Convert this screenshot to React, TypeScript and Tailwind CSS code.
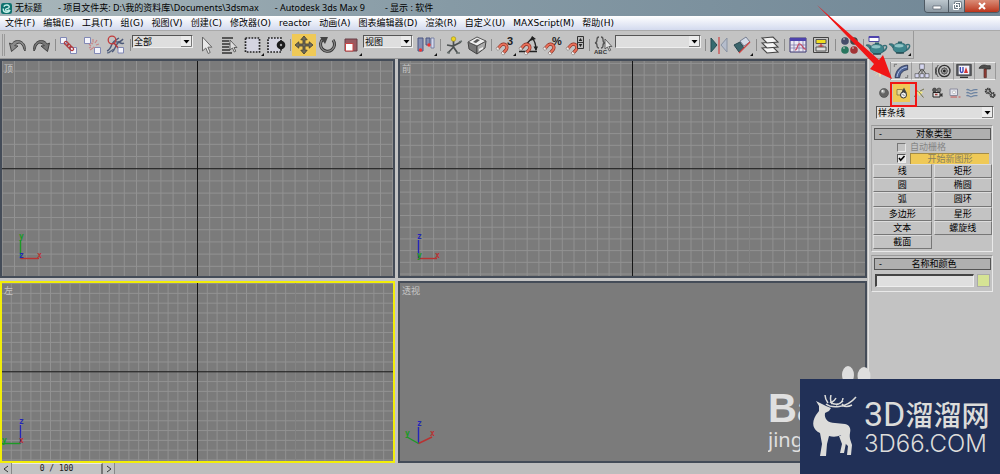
import type { ReactNode } from "react";

type IconProps = { children: ReactNode; size?: string };

function Icon({ children, size = "size-6" }: IconProps) {
  return (
    <svg viewBox="0 0 24 24" className={`${size} shrink-0`} fill="none" aria-hidden="true">
      {children}
    </svg>
  );
}

const FLYOUT = <path d="M23 20v3h-3z" fill="#111" />;

function Magnet() {
  return (
    <g transform="translate(1 2) rotate(42 9 14) scale(.9)">
      <path d="M5.500 20v-6a3.800 3.800 0 0 1 7.600 0v6" stroke="#8e2f22" strokeWidth="3.600" />
      <path d="M5.500 20v-6a3.800 3.800 0 0 1 7.600 0v6" stroke="#e8705a" strokeWidth="2.200" />
      <path d="M3.900 18h3.200v2.500H3.900zM11.500 18h3.200v2.500h-3.200z" fill="#f4efec" stroke="#777" strokeWidth=".6" />
    </g>
  );
}

function Teapot({ y = 0 }: { y?: number }) {
  return (
    <g transform={`translate(0 ${y})`}>
      <path d="M5 14C2 10 1 11 1 10c3-1 5 0 6 3" fill="#397d84" stroke="#285860" strokeWidth=".6" />
      <path d="M18 11c5-2 5 3-1 6" stroke="#346f77" strokeWidth="1.5" />
      <ellipse cx="12" cy="14" rx="7" ry="5.2" fill="#3d858c" stroke="#22535a" strokeWidth=".6" />
      <ellipse cx="11" cy="11.7" rx="4.5" ry="1.7" fill="#8fc3c5" />
      <path d="M10 9h4v-1.5h-4z" fill="#2a6169" />
      <path d="M8 19h8" stroke="#1d3f45" strokeWidth="1.2" />
    </g>
  );
}

const icons = {
  undo: (
    <Icon>
      <path d="M3.5 10l2 8.5 6.5-5.5-3.3-.3C11 9.5 16 8 18 16.500L19 18c2.500-9-8.500-14.500-13.200-7z" fill="#8a8a8a" stroke="#454545" strokeWidth="1" />
    </Icon>
  ),
  redo: (
    <Icon>
      <path d="M20.500 10l-2 8.500-6.500-5.500 3.300-.3C13 9.500 8 8 6 16.500L5 18C2.500 9 13.500 3.500 18.200 11z" fill="#777" stroke="#404040" strokeWidth="1" />
    </Icon>
  ),
  link: (
    <Icon>
      <path d="M3.500 4.500h6v6h-6zM13.500 14.500h6v6h-6z" fill="#f4f4fb" stroke="#8188b5" />
      <g stroke="#b03a3e" strokeWidth="1.300">
        <ellipse cx="9.500" cy="10.500" rx="2.300" ry="1.600" transform="rotate(45 9.500 10.500)" />
        <ellipse cx="12" cy="13" rx="2.300" ry="1.600" transform="rotate(45 12 13)" />
        <ellipse cx="14.500" cy="15.500" rx="2.300" ry="1.600" transform="rotate(45 14.500 15.500)" />
      </g>
    </Icon>
  ),
  unlink: (
    <Icon>
      <path d="M3.500 4.500h6v6h-6zM13.500 14.500h6v6h-6z" fill="#f4f4fb" stroke="#8188b5" />
      <path d="M8 11l2 2M10 10l2 1M12 9.500V6M14 10l2-3M15 12l3-1M8 15l2-1M9 17l3-2M12 14l2 1" stroke="#c98587" strokeWidth="1.200" />
    </Icon>
  ),
  bind: (
    <Icon>
      <path d="M3 18c3-1 4-4 5-7s4-4 7-6M8 19c3-2 3-5 5-8s4-2 6-5M12 9c3-1 5 3 8 1" stroke="#4b5878" strokeWidth="1.400" />
      <path d="M3 20c4 0 4-4 8-4" stroke="#596783" strokeWidth="1.200" />
      <circle cx="8" cy="7" r="3.800" stroke="#c23c3c" strokeWidth="1.300" />
      <path d="M10 10l5 6" stroke="#b03a3e" strokeWidth="1.500" />
      <path d="M14 14.500h5.500v5.500H14z" fill="#f4f4fb" stroke="#8188b5" />
    </Icon>
  ),
  cursor: (
    <Icon>
      <path d="M8.500 4v14l3.300-3 2.400 5.500 2-1-2.300-5.300h4z" fill="#e8e8e8" stroke="#666" />
    </Icon>
  ),
  byName: (
    <Icon>
      <path d="M5 5h11M5 8h7M5 11h10M5 14h7M5 17h8M5 20h10" stroke="#333" strokeWidth="1.500" />
      <path d="M13 7v10l2.400-2 1.900 4 1.500-.8-1.800-3.700h3z" fill="#ddd" stroke="#555" strokeWidth=".9" />
    </Icon>
  ),
  region: (
    <Icon>
      <path d="M4.500 5h14v14h-14z" fill="#d4d4e0" stroke="#222" strokeWidth="1.700" strokeDasharray="1.700 1.300" />
      {FLYOUT}
    </Icon>
  ),
  window: (
    <Icon>
      <path d="M4 5h13v14H4z" fill="#d4d4e0" stroke="#222" strokeWidth="1.700" strokeDasharray="1.700 1.300" />
      <circle cx="17" cy="12" r="4.300" fill="#1c1c1c" />
      <circle cx="17" cy="12" r="1.200" fill="#aaa" />
    </Icon>
  ),
  move: (
    <Icon>
      <path d="M12 3l3.200 3.800H13v4.200h4.200V8.800L21 12l-3.800 3.200V13H13v4.200h2.200L12 21l-3.200-3.800H11V13H6.800v2.200L3 12l3.800-3.200V11H11V6.800H8.800z" fill="#706c5a" stroke="#3c3b33" strokeWidth=".8" />
    </Icon>
  ),
  rotate: (
    <Icon>
      <path d="M7 6a7 7 0 1 0 10 1" stroke="#303030" strokeWidth="3" />
      <path d="M7 6a7 7 0 1 0 10 1" stroke="#858585" strokeWidth="1.300" />
      <path d="M4 4h8L9 11z" fill="#444" />
    </Icon>
  ),
  scale: (
    <Icon>
      <path d="M6 6h12v12H6z" fill="#9a5960" stroke="#663f46" />
      <path d="M6.500 10.500h7.500v7.500H6.500z" fill="#fff" stroke="#c74444" />
      {FLYOUT}
    </Icon>
  ),
  pivot: (
    <Icon>
      <path d="M4 5h5v13H4zM12 5h4v7h-4z" fill="#8790b1" stroke="#4b5582" />
      <path d="M17 5h3v10h-3z" fill="#d5d9ec" stroke="#68719b" strokeWidth=".8" />
      <circle cx="6.500" cy="17" r="1.700" fill="#e33" />
      <circle cx="15" cy="12" r="1.700" fill="#e33" />
      {FLYOUT}
    </Icon>
  ),
  manipulate: (
    <Icon>
      <path d="M11.500 6v8M5 12l6 1 8-4M11.500 14L6 20M11.500 14l4 6" stroke="#4b5050" strokeWidth="1.700" />
      <path d="M17 9l3-1M5 19.500l3 .5M14 20h4" stroke="#68706f" strokeWidth="1.500" />
      <circle cx="11.500" cy="6" r="2.300" fill="#efd51f" stroke="#948618" strokeWidth=".6" />
    </Icon>
  ),
  override: (
    <Icon>
      <path d="M3 9l9 4v8l-8-5z" fill="#777" stroke="#444" />
      <path d="M12 13l9-5-1 7-8 6z" fill="#aaa" stroke="#444" />
      <path d="M3 9l9-5 9 4-9 5z" fill="#ededed" stroke="#555" />
      <path d="M8 9l4-3 3 1-4 3z" fill="#555" />
      <path d="M14 16l4-2v2l-4 2z" fill="#f1f1f1" />
    </Icon>
  ),
  snap: (
    <Icon>
      <Magnet />
      <text x="14" y="12" fontSize="11" fontWeight="700" fontFamily="Liberation Sans, sans-serif" fill="#222">3</text>
      {FLYOUT}
    </Icon>
  ),
  angle: (
    <Icon>
      <path d="M3 18.500h18M5 17L17 4M16 5c3 3 4 8 4 12" stroke="#222" strokeWidth="1.300" />
      <path d="M14 8l2-5 4 3zM17.500 13.500h4.500l-2 4.500z" fill="#222" />
      <Magnet />
    </Icon>
  ),
  percent: (
    <Icon>
      <Magnet />
      <text x="12" y="12" fontSize="11" fontWeight="700" fontFamily="Liberation Sans, sans-serif" fill="#222">%</text>
    </Icon>
  ),
  spinner: (
    <Icon>
      <Magnet />
      <path d="M14.500 3.500h6v12h-6zM14.500 9.500h6" fill="#bbb" stroke="#333" />
      <path d="M17.500 5l1.800 3h-3.600zM17.500 14l1.800-3h-3.600z" fill="#222" />
    </Icon>
  ),
  namedSets: (
    <Icon>
      <path d="M8 4c-4 0 0 5-4 6 4 0 0 5 4 5M10 4c4 0 0 5 4 6-4 0 0 5-4 5" stroke="#555" strokeWidth="1.300" />
      <path d="M14 6v10l2.400-2 2 4 1.300-.8-1.800-3.700h3z" fill="#e4e4e4" stroke="#555" strokeWidth=".9" />
      <text x="3" y="21" fontSize="6" fontFamily="Liberation Sans, sans-serif" fontWeight="700" fill="#333">ABC</text>
    </Icon>
  ),
  mirror: (
    <Icon>
      <path d="M4 5l6 7-6 7z" fill="#366b70" stroke="#294d52" />
      <path d="M20 5l-6 7 6 7z" fill="#b5bdcc" stroke="#8993a3" />
      <path d="M12 4v17" stroke="#c44" strokeWidth="1.200" />
    </Icon>
  ),
  align: (
    <Icon>
      <path d="M4 12l6-3 4 6-5 4z" fill="#3b656c" stroke="#28474e" />
      <path d="M10 8l6-4 4 5-6 4z" fill="#d4dbe7" stroke="#777f91" />
      <path d="M9 20L20 9" stroke="#cf4545" strokeWidth="1.300" />
      {FLYOUT}
    </Icon>
  ),
  layers: (
    <Icon>
      <g fill="#f5f5f5" stroke="#444" strokeWidth="1.100">
        <path d="M4 15l11-1 5 5-11 1z" />
        <path d="M4 10l11-1 5 5-11 1z" />
        <path d="M4 5l11-1 5 5-11 1z" />
      </g>
    </Icon>
  ),
  curve: (
    <Icon>
      <path d="M4 5h16v14H4z" fill="#ece9f4" stroke="#3b3773" />
      <path d="M4 5h16v3H4z" fill="#4e43ad" />
      <path d="M8 8v11M13 8v11M17 8v11M4 12h16M4 15h16" stroke="#7770a0" strokeWidth=".7" />
      <path d="M9 17c3 0 2-7 5-6s3 6 6 5" stroke="#c34e67" strokeWidth="1.200" />
    </Icon>
  ),
  schematic: (
    <Icon>
      <path d="M4.500 4.500h15v15h-15z" fill="#c6c6c6" stroke="#444" />
      <path d="M7 6.500h10v4H7z" fill="#f0de21" stroke="#555" />
      <path d="M7 14h10v4H7z" fill="#ddd" stroke="#555" />
      <path d="M12 10.500V14M9.500 13h5" stroke="#b33" strokeWidth="1.200" />
    </Icon>
  ),
  materials: (
    <Icon>
      <circle cx="8" cy="8" r="3.800" fill="#454c69" />
      <circle cx="17" cy="8" r="3.800" fill="#454545" />
      <circle cx="8" cy="17" r="3.800" fill="#28765f" />
      <circle cx="17" cy="17" r="3.800" fill="#a23335" />
      <path d="M6 6h2M15 6h2M6 15h2M15 15h2" stroke="#ccc" />
    </Icon>
  ),
  renderScene: (
    <Icon>
      <Teapot y={2} />
      <path d="M4 3.500h10v5H4z" fill="#fff" stroke="#4e4aa0" />
      <path d="M4 3h10v2H4z" fill="#4e43ad" />
    </Icon>
  ),
  quickRender: (
    <Icon>
      <Teapot y={1} />
      {FLYOUT}
    </Icon>
  ),
};

type ToolName = keyof typeof icons;

function Tools({ names, width, active }: { names: ToolName[]; width: string; active?: ToolName }) {
  return (
    <div className={`flex shrink-0 ${width}`}>
      {names.map((name) => (
        <button
          key={name}
          type="button"
          aria-label={name}
          className={`flex h-[22px] min-w-0 flex-1 items-center justify-center ${name === active ? "bg-[#efc957]" : ""}`}
        >
          {icons[name]}
        </button>
      ))}
    </div>
  );
}

function Separator() {
  return (
    <div className="flex h-[12px] w-1 shrink-0 justify-center">
      <div className="w-px bg-[#8c8c8c]" />
    </div>
  );
}

function Dropdown({ label, value, width, fill = "bg-[#dedede]" }: { label: string; value: string; width: string; fill?: string }) {
  return (
    <div className={`relative shrink-0 ${width}`}>
      <select
        aria-label={label}
        className={`block h-[13px] w-full appearance-none border border-[#efefef] border-t-[#555] border-l-[#555] pl-px text-[9px] leading-[11px] text-black ${fill}`}
      >
        <option>{value}</option>
      </select>
      <svg viewBox="0 0 11 11" className="pointer-events-none absolute top-px right-px size-[11px]" aria-hidden="true">
        <path d="M0 0h11v11H0z" fill="#ececec" />
        <path d="M0 10.500h10.500V0" stroke="#777" fill="none" />
        <path d="M2.500 4h6l-3 3.500z" fill="#000" />
      </svg>
    </div>
  );
}

type Axis = { x: number; y: number; color: string; name: string; tx: number; ty: number };

function AxisTripod({ axes }: { axes: Axis[] }) {
  return (
    <svg viewBox="0 0 48 36" className="absolute bottom-[11px] left-0 h-9 w-12 overflow-visible" aria-hidden="true">
      {axes.map((a) => (
        <g key={a.name}>
          <path d={`M18.500 29.500L${a.x} ${a.y}`} stroke={a.color} strokeWidth="1.400" />
          <text x={a.tx} y={a.ty} fill={a.color} fontSize="8" fontWeight="700" fontFamily="DejaVu Sans Mono, monospace">
            {a.name}
          </text>
        </g>
      ))}
    </svg>
  );
}

function Grid({ pitch }: { pitch: number }) {
  const steps = Array.from({ length: 81 }, (_, i) => i - 40);
  return (
    <svg className="absolute inset-0 size-full" aria-hidden="true">
      <svg x="50%" y="50%" overflow="visible">
        {steps.map((n) => (
          <g key={n} stroke={n % 10 === 0 ? "#848484" : "#929292"}>
            <path d={`M${n * pitch} -1000V1000`} />
            <path d={`M-2000 ${n * pitch}H2000`} />
          </g>
        ))}
        <path d="M0 -1000V1000M-2000 0H2000" stroke="#161616" />
      </svg>
    </svg>
  );
}

function Viewport({ name, pitch, active, axes }: { name: string; pitch?: number; active?: boolean; axes: Axis[] }) {
  return (
    <section className={`relative min-h-0 overflow-hidden border-2 bg-[#7b7b7b] ${active ? "border-[#f2ee08]" : "border-[#444c58]"}`}>
      {pitch && <Grid pitch={pitch} />}
      <h2 className="relative px-[2px] pt-[2px] text-[9px] leading-3 text-[#c6c6c6]">{name}</h2>
      <AxisTripod axes={axes} />
    </section>
  );
}

const RED = "#b83232";
const GREEN = "#1c9a25";
const BLUE = "#2424b8";

const menus = ["文件(F)", "编辑(E)", "工具(T)", "组(G)", "视图(V)", "创建(C)", "修改器(O)", "reactor", "动画(A)", "图表编辑器(D)", "渲染(R)", "自定义(U)", "MAXScript(M)", "帮助(H)"];

const panelTabs: { name: string; art: ReactNode }[] = [
  { name: "创建", art: <path d="M12 3l2 7 7 2-7 2-2 7-2-7-7-2 7-2zM5 5l14 14M19 5L5 19" fill="#fff8d8" stroke="#e4d9ad" /> },
  {
    name: "修改",
    art: (
      <>
        <path d="M3 22C4 11 10 4 22 3v7c-7 1-11 5-12 12z" fill="#4e6394" stroke="#1b2340" />
        <path d="M6 21C7 13 12 7 21 6" stroke="#b2c1e4" strokeWidth="1.500" />
        <path d="M2 2v4M2 2h4M22 22v-4M22 22h-4" stroke="#555" />
      </>
    ),
  },
  {
    name: "层次",
    art: (
      <>
        <path d="M12 8L5 18M12 8v10M12 8l7 10" stroke="#444" strokeWidth="1.500" />
        <path d="M8.500 1.500h7v8h-7zM1.500 16h6v6h-6zM9 16h6v6H9zM16.500 16h6v6h-6z" fill="#d5d6f0" stroke="#555" />
      </>
    ),
  },
  {
    name: "运动",
    art: (
      <>
        <path d="M5 3C1 8 1 16 5 21M2 6c-2 4-2 8 0 12" stroke="#444" strokeWidth="1.500" />
        <circle cx="14" cy="12" r="8.500" stroke="#333" strokeWidth="2" />
        <circle cx="14" cy="12" r="4.500" stroke="#555" strokeWidth="1.500" />
        <path d="M14 6v12M8 12h12M10 8l8 8M18 8l-8 8" stroke="#555" />
        <circle cx="14" cy="12" r="2" fill="#222" />
      </>
    ),
  },
  {
    name: "显示",
    art: (
      <>
        <path d="M1 2h22v17H1z" fill="#56585f" stroke="#333" />
        <path d="M4 4h16v13H4z" fill="#f3f3fb" />
        <path d="M6.500 6v6c0 3 4 3 4 0V6" stroke="#3944b3" strokeWidth="2" />
        <path d="M12 15l3-9 3 9" fill="#d43434" />
        <path d="M6 21.500h12" stroke="#333" strokeWidth="2" />
      </>
    ),
  },
  {
    name: "工具",
    art: (
      <>
        <path d="M3 8c2-5 8-6 12-4h5v5h-5l-3-1H7z" fill="#4e4e4e" stroke="#222" />
        <path d="M10.500 9h3.500v13h-3.500z" fill="#943e35" stroke="#4c2924" />
      </>
    ),
  },
];

const categories: { name: string; art: ReactNode }[] = [
  {
    name: "几何体",
    art: (
      <>
        <circle cx="12" cy="12" r="9" fill="#646464" stroke="#3d3d3d" />
        <circle cx="10" cy="9" r="4" fill="#a9abaa" />
        <circle cx="9" cy="8" r="1.800" fill="#eee" />
      </>
    ),
  },
  {
    name: "图形",
    art: (
      <>
        <path d="M2 5h11v11H2z" fill="#e6d89b" stroke="#786d39" strokeWidth="1.500" />
        <path d="M16 1l6 12H10z" fill="#444" />
        <circle cx="15" cy="16" r="6" fill="#eee" stroke="#333" strokeWidth="2" />
        <path d="M13 14l4 4" stroke="#555" strokeWidth="1.500" />
      </>
    ),
  },
  {
    name: "灯光",
    art: (
      <>
        <path d="M5 6l15 4-7 8z" fill="#f3e983" />
        <path d="M4 4l6 5M11 9l10 12M14 8l8-4M7 12l-4 8" stroke="#71704c" strokeWidth="2" />
      </>
    ),
  },
  {
    name: "摄影机",
    art: (
      <>
        <circle cx="7" cy="6" r="4" fill="#555" stroke="#222" />
        <circle cx="16" cy="6" r="4" fill="#777" stroke="#222" />
        <path d="M4 11h14v9H4z" fill="#ddd" stroke="#222" strokeWidth="2" />
        <path d="M18 15l5-3v8l-5-3z" fill="#333" />
        <path d="M8 15h5" stroke="#a43c3c" strokeWidth="3" />
      </>
    ),
  },
  {
    name: "辅助对象",
    art: (
      <>
        <path d="M2 4h15v13H2z" fill="#e3e3ec" stroke="#8a8b9c" strokeWidth="2" />
        <circle cx="10" cy="10.500" r="3" fill="#fff" stroke="#999" />
        <path d="M3 20h13M19 20h4" stroke="#c65353" strokeWidth="2" />
      </>
    ),
  },
  {
    name: "空间扭曲",
    art: <path d="M1 6c4-4 6 4 11 1s7-1 11-2M1 12c4-4 6 4 11 1s7-1 11-2M1 18c4-4 6 4 11 1s7-1 11-2" stroke="#6c83a1" strokeWidth="2.500" />,
  },
  {
    name: "系统",
    art: (
      <>
        <circle cx="8" cy="8" r="4.500" stroke="#333" strokeWidth="4" strokeDasharray="2.500 1" />
        <circle cx="17" cy="16" r="4" stroke="#333" strokeWidth="4" strokeDasharray="2.500 1" />
        <circle cx="8" cy="8" r="3" stroke="#555" strokeWidth="2" />
        <circle cx="17" cy="16" r="3" stroke="#555" strokeWidth="2" />
      </>
    ),
  },
];

const shapes = ["线", "矩形", "圆", "椭圆", "弧", "圆环", "多边形", "星形", "文本", "螺旋线", "截面"];

function Rollout({ title, children }: { title: string; children: ReactNode }) {
  return (
    <section className="border border-[#e9e9e9] border-t-[#999] border-l-[#aaa] pt-[2px] pb-[2px] pl-px">
      <button type="button" className="mr-px ml-px flex h-3 w-[calc(100%-2px)] items-center border border-[#555] bg-[#b0b0b0] px-1 text-[9px] leading-[10px]">
        <span aria-hidden="true">-</span>
        <span className="flex-1 text-center">{title}</span>
      </button>
      {children}
    </section>
  );
}

function CommandPanel() {
  return (
    <aside className="flex w-[132px] shrink-0 flex-col border-l border-[#e2e2e2] pt-[3px] text-[9px]">
      <div role="tablist" className="flex h-[18px] pr-1 pl-px">
        {panelTabs.map((tab, i) => (
          <button
            key={tab.name}
            type="button"
            role="tab"
            aria-label={tab.name}
            aria-selected={i === 0}
            className={`flex flex-1 items-center justify-center border-r border-[#999] ${i === 0 ? "" : "border-t border-t-[#eee] border-b border-b-[#eee]"}`}
          >
            <Icon size="size-4">{tab.art}</Icon>
          </button>
        ))}
      </div>
      <div className="mt-1 flex h-[18px] pr-px pl-[6px]">
        {categories.map((c) => (
          <button key={c.name} type="button" aria-label={c.name} className={`flex flex-1 items-center justify-center ${c.name === "图形" ? "bg-[#efc957]" : ""}`}>
            <Icon size="size-3">{c.art}</Icon>
          </button>
        ))}
      </div>
      <div className="mt-1 pr-[6px] pl-[7px]">
        <Dropdown label="图形类别" value="样条线" width="w-full" />
      </div>
      <div className="mt-[6px] mr-[7px] ml-[2px] flex flex-col gap-[3px]">
        <Rollout title="对象类型">
          <div className="flex pt-px pl-6 text-[#858585]">
            <label className="flex h-3 items-center gap-1">
              <input type="checkbox" disabled className="size-[9px] appearance-none border border-[#e5e5e5] border-t-[#777] border-l-[#777]" />
              自动栅格
            </label>
          </div>
          <div className="flex h-[11px] items-center gap-1 pr-[3px] pl-6">
            <span className="relative flex size-[9px] shrink-0">
              <input id="new-shape" type="checkbox" defaultChecked className="size-[9px] appearance-none border border-[#eee] border-t-[#555] border-l-[#555] bg-[#e5e5e5]" />
              <svg viewBox="0 0 9 9" className="pointer-events-none absolute inset-0" aria-hidden="true">
                <path d="M2 4l1.700 2.200L7.500 2" fill="none" stroke="#000" strokeWidth="1.600" />
              </svg>
            </span>
            <label htmlFor="new-shape" className="flex-1 border-t border-l border-[#a48c46] bg-[#efc957] text-center leading-[10px] text-[#88815f]">
              开始新图形
            </label>
          </div>
          <div className="grid h-[85px] auto-rows-fr grid-cols-2 gap-x-[2px]">
            {shapes.map((s) => (
              <button key={s} type="button" className="border border-[#ddd] border-r-[#777] border-b-[#777] text-center leading-3">
                {s}
              </button>
            ))}
          </div>
        </Rollout>
        <Rollout title="名称和颜色">
          <div className="flex items-center gap-[3px] px-[2px] pt-1 pb-[2px]">
            <input aria-label="名称" className="h-[13px] min-w-0 flex-1 border border-[#eee] border-t-2 border-t-[#444] border-l-2 border-l-[#444] bg-[#dfdfdf]" />
            <button type="button" aria-label="颜色" className="h-[13px] w-[13px] border border-[#aaa] bg-[#d5e394]" />
          </div>
        </Rollout>
      </div>
    </aside>
  );
}

function TitleBar() {
  return (
    <header className="relative flex h-4 items-center overflow-hidden bg-linear-to-r from-[#a9b7bb] via-[#869aa5] via-45% to-[#718796] text-[9px]">
      <svg viewBox="0 0 24 24" className="mr-[3px] ml-px size-[11px]" aria-hidden="true">
        <rect width="24" height="24" rx="5" fill="#0d716e" />
        <path d="M6 8c3-6 13-4 12 1s-9 2-8 6 7 2 8-1M5 12c-1 10 12 11 15 3" fill="none" stroke="#c5f0e9" strokeWidth="3" />
      </svg>
      <h1 className="flex gap-4 whitespace-pre text-black">
        <span>无标题</span>
        <span>- 项目文件夹: D:\我的资料库\Documents\3dsmax</span>
        <span>- Autodesk 3ds Max 9</span>
        <span className="pl-1">- 显示 : 软件</span>
      </h1>
      <div className="ml-auto flex h-[13px] self-start overflow-hidden rounded-b-sm border border-t-0 border-[#4e5963] text-white">
        <button type="button" aria-label="最小化" className="flex w-6 items-center justify-center border-r border-[#4e5963] bg-linear-to-b from-[#bdc7ce] to-[#8996a0]">
          <svg viewBox="0 0 10 10" className="size-[10px]" aria-hidden="true"><path d="M1 5h8v3H1z" fill="#fff" stroke="#56606a" strokeWidth=".7" /></svg>
        </button>
        <button type="button" aria-label="还原" className="flex w-4 items-center justify-center border-r border-[#4e5963] bg-linear-to-b from-[#bdc7ce] to-[#8996a0]">
          <svg viewBox="0 0 10 10" className="size-[10px]" fill="none" aria-hidden="true"><path d="M3.500 1.500h5v5h-5z" stroke="#44505a" strokeWidth="2" /><path d="M3.500 1.500h5v5h-5zM1.500 3.500h5v5h-5z" stroke="#fff" /></svg>
        </button>
        <button type="button" aria-label="关闭" className="flex w-[34px] items-center justify-center bg-linear-to-b from-[#d98b76] to-[#bb3319]">
          <svg viewBox="0 0 10 10" className="size-[10px]" aria-hidden="true"><path d="M2 2l6 6M8 2L2 8" stroke="#fff" strokeWidth="2" /></svg>
        </button>
      </div>
    </header>
  );
}

function Brand() {
  return (
    <div className="absolute right-0 bottom-0 flex h-[95px] w-[200px] items-center bg-[#213057] pl-2 text-[#dcdcda]">
      <svg viewBox="0 0 52 64" className="h-16 w-[52px] shrink-0" aria-hidden="true">
        <path d="M11 11l-3-5 6 3 4 2 5 2-2 3-4 2c-1 6 3 10 10 10l10 1c5 1 6 5 5 9-1 5 1 8 2 12l-1 10h-4l1-9c-4-3-6-7-7-11-4 2-8 2-12 1l-2 8-1 12H12l2-12-2-11C5 35 3 28 8 20l3-4z" fill="#dcdcda" />
        <path d="M34 40l4 8-2 10h-4l2-9-3-8z" fill="#dcdcda" />
        <path d="M18 9c5 4 20 5 30-7M20 8c-2-3-3-5-3-8M24 9c-2-3-2-5-1-9M28 10c4-1 7-4 7-7M34 9c2 3 6 3 10 1M28 3c-1 2-2 3-4 4M22 7c4 3 9 3 13-1" fill="none" stroke="#dcdcda" strokeWidth="1.500" />
      </svg>
      <div className="flex flex-col gap-[2px] pl-1 whitespace-nowrap">
        <div className="flex h-8 items-center leading-8">
          <span className="font-['Roboto',sans-serif] text-[34px]">3D</span>
          <span className="font-['Noto_Sans_CJK_SC',sans-serif] text-[28px] font-medium">溜溜网</span>
        </div>
        <div className="font-['Inter',sans-serif] text-[24px] leading-6 font-light">3D66.COM</div>
      </div>
    </div>
  );
}

export default function App() {
  return (
    <div className="relative flex min-h-screen flex-col overflow-hidden bg-[#c3c3c3] font-['Noto_Sans','Noto_Sans_CJK_SC',sans-serif] text-black">
      <TitleBar />
      <nav className="flex h-[15px] items-center gap-2 border-b border-[#aaa] bg-linear-to-b from-white to-[#d3daee] pl-[5px] font-['DejaVu_Sans','Noto_Sans_CJK_SC',sans-serif] text-[9px] leading-3 whitespace-nowrap">
        {menus.map((m) => (
          <button key={m} type="button">{m}</button>
        ))}
      </nav>
      <div role="toolbar" aria-label="主工具栏" className="flex h-7 items-center self-start border-r border-b border-[#999] pr-px">
        <div className="mr-px ml-[2px] h-[22px] w-[3px] shrink-0 border-x border-[#999]" />
        <Tools names={["undo", "redo"]} width="w-[47px]" />
        <Separator />
        <Tools names={["link", "unlink", "bind"]} width="w-[71px]" />
        <Separator />
        <div className="mr-px self-start pt-1"><Dropdown label="选择过滤器" value="全部" width="w-[61px]" /></div>
        <Tools names={["cursor", "byName", "region", "window"]} width="w-[94px]" />
        <Separator />
        <Tools names={["move", "rotate", "scale"]} width="w-[71px]" active="move" />
        <div className="mr-px self-start pt-1"><Dropdown label="参考坐标系" value="视图" width="w-[50px]" /></div>
        <Tools names={["pivot"]} width="w-6" />
        <Separator />
        <Tools names={["manipulate", "override"]} width="w-[47px]" />
        <Separator />
        <Tools names={["snap", "angle", "percent", "spinner"]} width="w-[94px]" />
        <Separator />
        <Tools names={["namedSets"]} width="w-6" />
        <div className="mr-[2px] self-start pt-1"><Dropdown label="命名选择集" value="" width="w-[86px]" /></div>
        <Separator />
        <Tools names={["mirror", "align"]} width="w-[47px]" />
        <Separator />
        <Tools names={["layers"]} width="w-6" />
        <Separator />
        <Tools names={["curve", "schematic"]} width="w-[47px]" />
        <Separator />
        <Tools names={["materials"]} width="w-6" />
        <Separator />
        <Tools names={["renderScene", "quickRender"]} width="w-[47px]" />
      </div>
      <div className="flex flex-1">
        <div className="flex min-w-0 flex-1 flex-col">
          <main className="grid flex-1 grid-cols-[395fr_469fr] grid-rows-[220fr_182fr] gap-[3px] pr-px">
            <Viewport name="顶" pitch={12.2} axes={[
              { x: 18.5, y: 11, color: GREEN, name: "y", tx: 17, ty: 10 },
              { x: 37, y: 29.5, color: RED, name: "x", tx: 35, ty: 29 },
              { x: 18.5, y: 29.5, color: BLUE, name: "z", tx: 17, ty: 29 },
            ]} />
            <Viewport name="前" pitch={11.7} axes={[
              { x: 18.5, y: 11, color: BLUE, name: "z", tx: 17, ty: 10 },
              { x: 37, y: 29.5, color: RED, name: "x", tx: 35, ty: 29 },
              { x: 18.5, y: 29.5, color: GREEN, name: "y", tx: 17, ty: 29 },
            ]} />
            <Viewport name="左" pitch={9.8} active axes={[
              { x: 18.5, y: 11, color: BLUE, name: "z", tx: 17, ty: 10 },
              { x: 0, y: 29.5, color: GREEN, name: "y", tx: 0, ty: 29 },
              { x: 18.5, y: 29.5, color: RED, name: "x", tx: 17, ty: 29 },
            ]} />
            <Viewport name="透视" axes={[
              { x: 18.5, y: 13, color: BLUE, name: "z", tx: 17, ty: 12 },
              { x: 32, y: 23, color: RED, name: "x", tx: 30, ty: 22 },
              { x: 7, y: 23, color: GREEN, name: "y", tx: 5, ty: 22 },
            ]} />
          </main>
          <footer className="flex h-[11px] items-stretch font-['DejaVu_Sans_Mono',monospace] text-[8px] leading-[10px] text-[#222]">
            <button type="button" aria-label="上一帧" className="flex w-3 items-center justify-center border-r border-[#888]">
              <svg viewBox="0 0 8 8" className="size-2" fill="none" aria-hidden="true"><path d="M6 1L2 4l4 3" stroke="#333" /></svg>
            </button>
            <div className="w-[91px] border-t border-r-2 border-[#777] border-t-[#e8e8e8] text-center">0 / 100</div>
            <button type="button" aria-label="下一帧" className="flex w-3 items-center justify-center border-r border-[#888]">
              <svg viewBox="0 0 8 8" className="size-2" fill="none" aria-hidden="true"><path d="M2 1l4 3-4 3" stroke="#333" /></svg>
            </button>
            <div className="flex-1 bg-[#bdbdbd]" />
          </footer>
        </div>
        <CommandPanel />
      </div>
      <div className="absolute right-[200px] bottom-0 h-[84px] w-8 overflow-hidden font-['Liberation_Sans',sans-serif] text-[#e0e0e0]" aria-hidden="true">
        <div className="text-[40px] leading-9 font-bold">Ba</div>
        <div className="font-['Noto_Sans',sans-serif] text-[20px] leading-7">jing</div>
      </div>
      <svg viewBox="0 0 32 16" className="absolute right-[128px] bottom-[92px] h-4 w-8" aria-hidden="true">
        <ellipse cx="8" cy="9" rx="6" ry="9" fill="#dedede" />
        <ellipse cx="24" cy="10" rx="6.500" ry="9" fill="#dedede" />
      </svg>
      <Brand />
      <div className="absolute top-[82px] right-[83px] h-[25px] w-[27px] border-2 border-[#f01616]" />
      <svg viewBox="0 0 78 76" className="absolute top-1 right-[106px] h-[76px] w-[78px]" aria-hidden="true">
        <path d="M1 1l62 55 4-5 9 24-22-10 4-5z" fill="#f01616" />
      </svg>
    </div>
  );
}
